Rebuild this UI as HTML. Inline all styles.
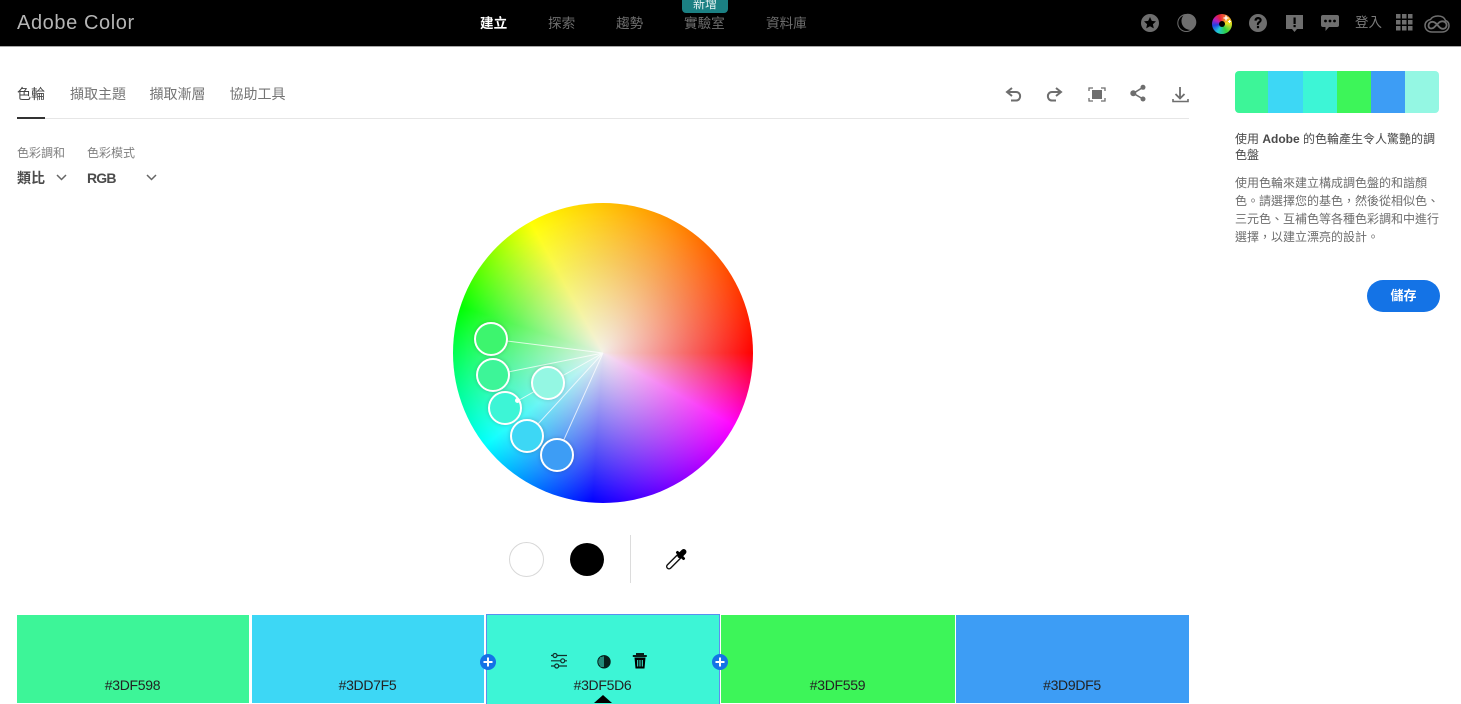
<!DOCTYPE html>
<html lang="zh-Hant">
<head>
<meta charset="utf-8">
<title>Adobe Color</title>
<style>
html,body{margin:0;padding:0;background:#fff;}
body{width:1461px;height:703px;overflow:hidden;position:relative;font-family:"Liberation Sans","Noto Sans CJK TC",sans-serif;color:#4b4b4b;}
.a{position:absolute;white-space:nowrap;}
#top{position:absolute;left:0;top:0;width:1461px;height:46px;background:#000;border-bottom:1px solid #a8a8a8;}
.nav{position:absolute;top:15px;font-size:13.6px;line-height:17px;color:#6e6e6e;white-space:nowrap;}
.tab{position:absolute;top:85px;font-size:14px;line-height:19px;color:#747474;white-space:nowrap;}
.sw{position:absolute;top:615px;height:88px;overflow:hidden;}
.hex{position:absolute;left:-1px;right:0;top:62px;text-align:center;font-size:14px;letter-spacing:-.3px;line-height:17px;color:#222;}
.p{position:absolute;top:71px;height:42px;}
.h{position:absolute;width:30px;height:30px;border:2px solid #fff;border-radius:50%;box-shadow:0 0 4px rgba(0,0,0,.18);}
</style>
</head>
<body>
<div id="top"></div>
<div class="a" style="left:17px;top:11px;font-size:20px;line-height:24px;color:#b5b5b5;letter-spacing:.6px;font-weight:300;">Adobe Color</div>
<div class="nav" style="left:480px;color:#fff;font-weight:700;">建立</div>
<div class="nav" style="left:548px;">探索</div>
<div class="nav" style="left:616px;">趨勢</div>
<div class="nav" style="left:684px;">實驗室</div>
<div class="nav" style="left:766px;">資料庫</div>
<div class="a" style="left:682px;top:0;width:46px;height:13px;background:#1b8083;border-radius:0 0 4px 4px;color:#e8f4f4;font-size:12px;line-height:9px;text-align:center;">新增</div>

<svg class="a" style="left:1140px;top:12px;" width="315" height="23" viewBox="0 0 315 23">
  <circle cx="10" cy="11" r="9" fill="#6e6e6e"/>
  <path d="M10 5l1.800 3.900 4.200.5-3.100 2.800.9 4.200-3.800-2.100-3.800 2.100.9-4.200-3.100-2.800 4.200-.5z" fill="#000"/>
  <circle cx="46.300" cy="11" r="8.500" fill="none" stroke="#6e6e6e" stroke-width="1"/>
  <path d="M44.300 2.500A8.500 8.500 0 0 1 51.300 18A9 9 0 0 1 44.300 2.500z" fill="#6e6e6e"/>
  <circle cx="118" cy="11" r="9" fill="#6e6e6e"/>
  <path d="M114.800 8.300c.2-2 1.600-3 3.300-3 1.900 0 3.300 1.100 3.300 2.800 0 2.500-3 2.500-3 4.700h-1.200v-.6c0-2.500 2.700-2.700 2.700-4 0-.8-.7-1.300-1.700-1.300s-1.700.6-1.800 1.500z" fill="#000" stroke="#000" stroke-width=".6"/>
  <rect x="116.900" y="14" width="2.200" height="2.200" fill="#000"/>
  <path d="M146 3h17v14h-6l-2.500 3-2.500-3h-6z" fill="#6e6e6e"/>
  <rect x="153.500" y="5.500" width="2.200" height="6.500" fill="#000"/>
  <rect x="153.500" y="13" width="2.200" height="2.200" fill="#000"/>
  <path d="M183 3h14a2 2 0 0 1 2 2v8a2 2 0 0 1-2 2h-8l-3.500 4v-4H183a2 2 0 0 1-2-2V5a2 2 0 0 1 2-2z" fill="#6e6e6e"/>
  <circle cx="185.500" cy="9" r="1.400" fill="#000"/><circle cx="190" cy="9" r="1.400" fill="#000"/><circle cx="194.500" cy="9" r="1.400" fill="#000"/>
  <g fill="#6e6e6e">
    <rect x="256" y="2" width="4.500" height="4.500"/><rect x="262" y="2" width="4.500" height="4.500"/><rect x="268" y="2" width="4.500" height="4.500"/>
    <rect x="256" y="8" width="4.500" height="4.500"/><rect x="262" y="8" width="4.500" height="4.500"/><rect x="268" y="8" width="4.500" height="4.500"/>
    <rect x="256" y="14" width="4.500" height="4.500"/><rect x="262" y="14" width="4.500" height="4.500"/><rect x="268" y="14" width="4.500" height="4.500"/>
  </g>
  <g fill="none" stroke="#6e6e6e">
    <path stroke-width="1.500" d="M292 20c-4 0-7-2.700-7-6.500 0-3.300 2.500-5.500 5.500-6C292 5 295 4 298 4c3.500 0 6.500 1.500 7.500 4.500 2.200.8 3.500 2.800 3.500 5 0 3.800-3 6.500-7 6.500z"/>
    <path stroke-width="1.800" d="M289.500 16c-2-2.200-.8-6 2.800-6.200 3-.2 4.500 2.500 6 4.200 1.500 1.800 3 3 5 2.800 3-.3 4-3.500 2.800-5.500-1.300-2.300-5-2.800-7.300-.5l-4.800 4.600c-1.500 1.300-3.200 1.300-4.500.6z"/>
  </g>
</svg>
<div class="a" style="left:1212px;top:14px;width:20px;height:20px;border-radius:50%;background:conic-gradient(from -20deg,#e8203c,#f5e020 100deg,#30d040 170deg,#20c8d8 230deg,#2040e0 280deg,#b020c0 320deg,#e8203c);"></div>
<div class="a" style="left:1219px;top:21px;width:6px;height:6px;border-radius:50%;background:#000;"></div>
<svg class="a" style="left:1222px;top:14px;" width="10" height="12" viewBox="0 0 10 12">
  <path d="M4 1.500v5M1.500 4h5" stroke="#fff" stroke-width="1.300"/>
  <path d="M7.500 6v3M6 7.500h3" stroke="#fff" stroke-width="1"/>
</svg>
<div class="a" style="left:1355px;top:14px;font-size:13.5px;line-height:18px;color:#7a7a7a;">登入</div>

<div class="tab" style="left:17px;color:#444;">色輪</div>
<div class="tab" style="left:70px;">擷取主題</div>
<div class="tab" style="left:149.500px;">擷取漸層</div>
<div class="tab" style="left:229.500px;">協助工具</div>
<div class="a" style="left:17px;top:118px;width:1172px;height:1px;background:#e6e6e6;"></div>
<div class="a" style="left:17px;top:117px;width:28px;height:2px;background:#333;"></div>

<svg class="a" style="left:1000px;top:80px;" width="195" height="28" viewBox="0 0 195 28">
  <g fill="none" stroke="#6e6e6e" stroke-width="2">
    <path d="M7 12h9c5.500 0 5.500 8.500 0 8.500h-5"/>
    <path d="M12 8l-5 4 5 4"/>
    <path d="M61 12H52c-5.500 0-5.500 8.500 0 8.500h4"/>
    <path d="M56 8l5 4-5 4"/>
  </g>
  <rect x="92" y="10" width="10" height="9" fill="#6e6e6e"/>
  <path d="M89 11V8h4M101 8h4v3M105 18v3h-4M93 21h-4v-3" fill="none" stroke="#6e6e6e" stroke-width="1.300"/>
  <path d="M143 7.300l-9.700 6 9.700 5.700" fill="none" stroke="#6e6e6e" stroke-width="1.500"/>
  <circle cx="143" cy="7.300" r="2.500" fill="#6e6e6e"/><circle cx="133.300" cy="13.300" r="3" fill="#6e6e6e"/><circle cx="143" cy="19" r="2.500" fill="#6e6e6e"/>
  <path d="M180 7v12M175.500 14l4.500 4.500 4.500-4.500" fill="none" stroke="#6e6e6e" stroke-width="1.800"/>
  <path d="M173 19v2.500h15V19" fill="none" stroke="#6e6e6e" stroke-width="1.600"/>
</svg>

<div class="a" style="left:17px;top:145px;font-size:12px;line-height:16px;color:#808080;">色彩調和</div>
<div class="a" style="left:87px;top:145px;font-size:12px;line-height:16px;color:#808080;">色彩模式</div>
<div class="a" style="left:17px;top:169px;font-size:14px;line-height:19px;font-weight:700;color:#4b4b4b;">類比</div>
<div class="a" style="left:87px;top:169px;font-size:14px;line-height:19px;font-weight:700;letter-spacing:-.8px;color:#4b4b4b;">RGB</div>
<svg class="a" style="left:55px;top:173px;" width="105" height="10" viewBox="0 0 105 10">
  <path d="M2 2l4.500 4.500L11 2M92 2l4.500 4.500L101 2" fill="none" stroke="#666" stroke-width="1.500"/>
</svg>

<div class="a" style="left:453px;top:203px;width:300px;height:300px;border-radius:50%;background:radial-gradient(circle closest-side,rgba(50,30,0,.06) 0,rgba(50,30,0,.04) 60%,rgba(50,30,0,0) 92%),radial-gradient(circle closest-side,rgba(255,255,255,.96) 0,rgba(255,255,255,0) 100%),conic-gradient(from 90deg,#f00 0deg,#f0f 29deg,#00f 94deg,#0ff 142deg,#0f0 198deg,#ff0 241deg,#f80 300deg,#f00 360deg);"></div>
<svg class="a" style="left:453px;top:203px;" width="300" height="300" viewBox="453 203 300 300">
  <g stroke="#fff" stroke-opacity=".75" stroke-width="1" fill="none">
    <path d="M603 353L491 339M603 353L493 375M603 353L505 408M603 353L527 436M603 353L557 455"/>
  </g>
</svg>
<div class="h" style="left:474px;top:322px;background:#3DF56E;"></div>
<div class="h" style="left:476px;top:358px;background:#3DF598;"></div>
<div class="h" style="left:531px;top:366px;background:#94F7E3;"></div>
<div class="h" style="left:488px;top:391px;background:#3DF5D6;"></div>
<div class="a" style="left:515px;top:398px;width:5px;height:5px;background:#fff;border-radius:50%;"></div>
<div class="h" style="left:510px;top:419px;background:#3DD7F5;"></div>
<div class="h" style="left:540px;top:438px;background:#3D9DF5;"></div>

<div class="a" style="left:509px;top:542px;width:33px;height:33px;border:1px solid #d8d8d8;border-radius:50%;background:#fff;"></div>
<div class="a" style="left:570px;top:543px;width:34px;height:33px;border-radius:50%;background:#000;"></div>
<div class="a" style="left:630px;top:535px;width:1px;height:48px;background:#dcdcdc;"></div>
<svg class="a" style="left:664px;top:546px;" width="26" height="26" viewBox="0 0 26 26">
  <path d="M5 20.500L15 10.500" stroke="#111" stroke-width="6" stroke-linecap="round"/>
  <path d="M5 20.500L15 10.500" stroke="#fff" stroke-width="3.200" stroke-linecap="round"/>
  <path d="M13.500 6.500l6 6" stroke="#000" stroke-width="3" stroke-linecap="round"/>
  <path d="M16 9.500l3.700-3.700" stroke="#000" stroke-width="5.500" stroke-linecap="round"/>
</svg>

<div class="sw" style="left:17px;width:232px;background:#3DF598;"><div class="hex">#3DF598</div></div>
<div class="sw" style="left:252px;width:232px;background:#3DD7F5;"><div class="hex">#3DD7F5</div></div>
<div class="sw" style="left:486px;top:614px;width:232px;height:89px;background:#3DF5D6;border:1px solid #5b8ff0;border-bottom:0;"><div class="hex">#3DF5D6</div></div>
<div class="sw" style="left:721px;width:234px;background:#3DF559;"><div class="hex">#3DF559</div></div>
<div class="sw" style="left:956px;width:233px;background:#3D9DF5;"><div class="hex">#3D9DF5</div></div>

<svg class="a" style="left:478px;top:650px;" width="252" height="53" viewBox="478 650 252 53">
  <circle cx="488" cy="662" r="8" fill="#1473e6"/>
  <path d="M483.500 662h9M488 657.500v9" stroke="#fff" stroke-width="2"/>
  <circle cx="720" cy="662" r="8" fill="#1473e6"/>
  <path d="M715.500 662h9M720 657.500v9" stroke="#fff" stroke-width="2"/>
  <g fill="none" stroke="#12302c" stroke-width="1.200">
    <path d="M551 655.500h16M551 660.800h16M551 666h16"/>
    <circle cx="555" cy="655.500" r="2" fill="#3DF5D6"/><circle cx="562.700" cy="660.800" r="2" fill="#3DF5D6"/><circle cx="556.700" cy="666" r="2" fill="#3DF5D6"/>
  </g>
  <circle cx="604" cy="661.800" r="6.200" fill="#3DF5D6" stroke="#06201c" stroke-width="1"/>
  <path d="M604 655.300a6.500 6.500 0 0 1 0 13z" fill="#06201c"/>
  <path d="M604 657h-4M604 659h-5.800M604 661h-6.500M604 663h-6.500M604 665h-5.600M604 667h-3.500" stroke="#06201c" stroke-width="1.100"/>
  <path d="M632.800 656h14M636 654h8" stroke="#000" stroke-width="1.800" fill="none"/>
  <path d="M634.500 657.500h11l-1 11h-9z" fill="#000"/>
  <path d="M637.700 660v6.500M640 660v6.500M642.300 660v6.500" stroke="#3DF5D6" stroke-width="1"/>
  <path d="M594 703l9-8 9 8z" fill="#000"/>
</svg>

<div class="p" style="left:1235px;width:33px;background:#3DF598;border-radius:4px 0 0 4px;"></div>
<div class="p" style="left:1268px;width:35px;background:#3DD7F5;"></div>
<div class="p" style="left:1303px;width:34px;background:#3DF5D6;"></div>
<div class="p" style="left:1337px;width:34px;background:#3DF559;"></div>
<div class="p" style="left:1371px;width:34px;background:#3D9DF5;"></div>
<div class="p" style="left:1405px;width:34px;background:#94F7E3;border-radius:0 4px 4px 0;"></div>

<div class="a" style="left:1235px;top:131px;width:205px;font-size:12px;line-height:16px;color:#4a4a4a;white-space:normal;">使用 <b>Adobe</b> 的色輪產生令人驚艷的調色盤</div>
<div class="a" style="left:1235px;top:174px;width:205px;font-size:12px;line-height:18px;color:#6e6e6e;">使用色輪來建立構成調色盤的和諧顏<br>色。請選擇您的基色，然後從相似色、<br>三元色、互補色等各種色彩調和中進行<br>選擇，以建立漂亮的設計。</div>
<div class="a" style="left:1367px;top:280px;width:73px;height:32px;border-radius:16px;background:#1473e6;color:#fff;font-size:13px;font-weight:700;line-height:31px;text-align:center;">儲存</div>
</body>
</html>
